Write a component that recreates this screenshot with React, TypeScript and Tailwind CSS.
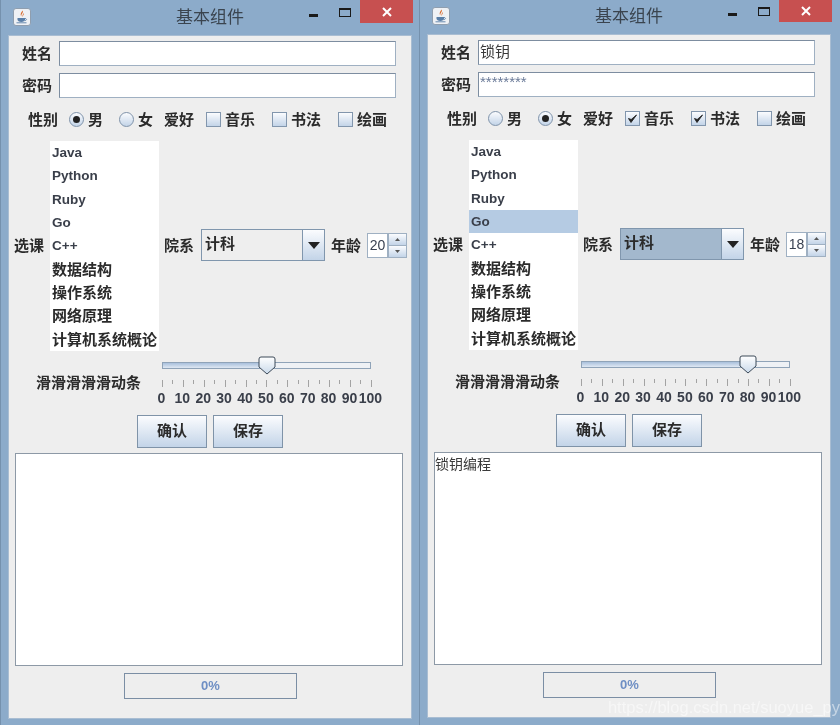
const CJK = "font-['Liberation_Sans','Noto_Sans_CJK_SC',sans-serif]";
const COURSES = ['Java', 'Python', 'Ruby', 'Go', 'C++', '数据结构', '操作系统', '网络原理', '计算机系统概论'];
const GRAD = 'bg-gradient-to-b from-[#fbfcfe] to-[#c3d4e8]';

function JavaIcon() {
  return (
    <svg width="18" height="18" viewBox="0 0 18 18">
      <rect x="0.5" y="0.5" width="17" height="17" rx="2.5" fill="#eef1f5" stroke="#8f9eaf" />
      <path d="M9.5 2.5C11 5 7.5 6 8.5 8.5C7 7 7.5 5.5 9.5 2.5Z M11 5C11 7 9.5 7.5 10 9C9 8 9.5 6.5 11 5Z" fill="#d8692a" />
      <path d="M4.5 10h7.5v1.6c0 1.6-1.5 2.4-3.7 2.4s-3.8-.8-3.8-2.4z" fill="#5a7fa8" />
      <path d="M12 10.5c2 0 2 2-.4 2.2M3.5 14.8h10" stroke="#5a7fa8" fill="none" strokeWidth="0.9" />
    </svg>
  );
}

function Radio({ on }: { on?: boolean }) {
  return (
    <span className={`flex w-[15px] h-[15px] shrink-0 items-center justify-center rounded-full border border-[#7f93aa] ${GRAD}`}>
      {on && <span className="w-[7px] h-[7px] rounded-full bg-[#222222]" />}
    </span>
  );
}

function Check({ on }: { on?: boolean }) {
  return (
    <span className={`flex w-[15px] h-[15px] shrink-0 items-center justify-center border border-[#8296ad] ${GRAD}`}>
      {on && (
        <svg width="11" height="11" viewBox="0 0 11 11">
          <path d="M1.5 5.5L4 9.5L9.5 2L4.2 6.5Z" fill="#222222" stroke="#222222" strokeWidth="0.9" />
        </svg>
      )}
    </span>
  );
}

function Field({ label, value, small }: { label: string; value?: string; small?: boolean }) {
  return (
    <div className="flex items-center h-[25px] pl-[13px]">
      <span className="w-[30px] text-[15px] font-bold text-[#2b2b2b] leading-none">{label}</span>
      <div className="ml-[7px] w-[337px] h-[25px] bg-white border border-[#9fb0c2] border-l-[#7d8da0] border-t-[#7d8da0] flex pl-px">
        <span className={small ? 'text-[15px] leading-[17px] text-[#6a7a98]' : 'text-[15px] leading-[22px] text-[#3a3a3a]'}>{value}</span>
      </div>
    </div>
  );
}

type WinProps = {
  name?: string;
  pwd?: string;
  female?: boolean;
  checks: boolean[];
  selected?: number;
  comboFocus?: boolean;
  age: number;
  pos: number;
  text?: string;
  extra?: string;
  width: string;
};

function Win({ name, pwd, female, checks, selected, comboFocus, age, pos, text, extra, width }: WinProps) {
  return (
    <div className={`${width} h-[726px] shrink-0 bg-[#8cabca] border-l border-[#7591ad] ${extra ?? ''}`}>
      <div className="grid grid-cols-[1fr_auto_1fr] h-[35px] w-[418px]">
        <div className="pl-[12px] pt-[8px]"><JavaIcon /></div>
        <div className="pt-[8px] text-[17px] leading-[20px] text-[#3a444f]">基本组件</div>
        <div className="flex justify-end pr-[6px]">
          <span className="mt-[14px] w-[9px] h-[3px] bg-[#1a1a1a]" />
          <span className="ml-[21px] mt-[8px] w-[12px] h-[9px] border border-[#1a1a1a] border-t-[2px]" />
          <span className="ml-[9px] w-[53px] h-[23px] bg-[#c75050] flex items-center justify-center">
            <svg width="10" height="10" viewBox="0 0 10 10"><path d="M1 1L9 9M9 1L1 9" stroke="#fff" strokeWidth="2" /></svg>
          </span>
        </div>
      </div>

      <div className="ml-[7px] w-[404px] h-[684px] bg-[#eeeeee] border border-[#a9bdd2] pt-[5px] flex flex-col">
        <Field label="姓名" value={name} />
        <div className="mt-[7px]"><Field label="密码" value={pwd} small /></div>

        <div className="flex items-center h-[18px] mt-[12px] pl-[19px] text-[15px] font-bold text-[#2b2b2b] leading-none">
          <span className="w-[30px]">性别</span>
          <span className="ml-[11px]"><Radio on={!female} /></span>
          <span className="ml-[4px] w-[15px]">男</span>
          <span className="ml-[16px]"><Radio on={female} /></span>
          <span className="ml-[4px] w-[15px]">女</span>
          <span className="ml-[11px] w-[30px]">爱好</span>
          <span className="ml-[12px]"><Check on={checks[0]} /></span>
          <span className="ml-[4px] w-[30px]">音乐</span>
          <span className="ml-[17px]"><Check on={checks[1]} /></span>
          <span className="ml-[4px] w-[30px]">书法</span>
          <span className="ml-[17px]"><Check on={checks[2]} /></span>
          <span className="ml-[4px] w-[30px]">绘画</span>
        </div>

        <div className="flex items-center mt-[13px] pl-[5px] text-[15px] font-bold text-[#2b2b2b] leading-none">
          <span className="w-[30px] mb-[2px]">选课</span>
          <div className="ml-[6px] w-[109px] h-[210px] bg-white flex flex-col">
            {COURSES.map((c, i) => (
              <div key={c} className={`h-[23.33px] pl-[2px] flex items-center whitespace-nowrap ${/[a-zA-Z]/.test(c) ? 'text-[13.5px] text-[#3a3f4a]' : ''} ${selected === i ? 'bg-[#b5cbe3]' : ''}`}>
                {c}
              </div>
            ))}
          </div>
          <span className="ml-[5px] w-[30px] mb-[2px]">院系</span>
          <div className="ml-[7px] mb-[2px] w-[124px] h-[32px] flex border border-[#8096ad]">
            <div className={`flex-1 pl-[3px] pt-[6px] ${comboFocus ? 'bg-[#a3b8cd]' : 'bg-[#eeeeee]'}`}>计科</div>
            <div className={`w-[22px] flex items-center justify-center border-l border-[#8096ad] ${GRAD}`}>
              <svg width="12" height="7" viewBox="0 0 12 7"><path d="M0 0H12L6 7Z" fill="#222222" /></svg>
            </div>
          </div>
          <span className="ml-[6px] w-[30px] mb-[2px]">年龄</span>
          <div className="ml-[6px] mb-[2px] w-[40px] h-[25px] flex">
            <div className="w-[21px] bg-white border border-[#9fb0c2] text-[14px] font-normal text-[#3a4252] flex items-center justify-center">{age}</div>
            <div className="w-[19px] flex flex-col">
              <span className={`h-[13px] border border-[#9fb0c2] flex items-center justify-center ${GRAD}`}>
                <svg width="5" height="3" viewBox="0 0 5 3"><path d="M0 3H5L2.5 0Z" fill="#555" /></svg>
              </span>
              <span className={`h-[12px] border border-t-0 border-[#9fb0c2] flex items-center justify-center ${GRAD}`}>
                <svg width="5" height="3" viewBox="0 0 5 3"><path d="M0 0H5L2.5 3Z" fill="#555" /></svg>
              </span>
            </div>
          </div>
        </div>

        <div className="flex items-start mt-[4px] h-[52px] pl-[27px]">
          <span className="w-[107px] text-[15px] font-bold text-[#2b2b2b] leading-none whitespace-nowrap mt-[20px]">滑滑滑滑滑动条</span>
          <div className="ml-[9px] w-[230px] flex flex-col">
            <div className="ml-[10px] w-[209px] h-[7px] mt-[7px] border border-[#8fa3b8] bg-[#eef1f5] flex relative">
              <div className="h-full bg-gradient-to-b from-[#a9c0dc] to-[#dfe8f3]" style={{ width: `${pos}%` }} />
              <svg className="absolute -top-[7px] -ml-[10px]" style={{ left: `${pos}%` }} width="20" height="20" viewBox="0 0 20 20">
                <defs>
                  <linearGradient id={`th${pos}`} x1="0" y1="0" x2="0" y2="1">
                    <stop offset="0" stopColor="#ffffff" />
                    <stop offset="1" stopColor="#c9d9ea" />
                  </linearGradient>
                </defs>
                <path d="M2 3Q2 1 4 1H16Q18 1 18 3V11L10 18L2 11Z" fill={`url(#th${pos})`} stroke="#3d4a58" strokeWidth="1" />
              </svg>
            </div>
            <div className="flex ml-[10px] w-[210px] justify-between items-start h-[7px] mt-[11px]">
              {Array.from({ length: 21 }, (_, i) => (
                <span key={i} className={`w-px bg-[#a3a3a3] ${i % 2 === 0 ? 'h-[7px]' : 'h-[4px]'}`} />
              ))}
            </div>
            <div className="flex mt-[3px] -ml-px">
              {Array.from({ length: 11 }, (_, i) => (
                <span key={i} className="w-[20.9px] shrink-0 flex justify-center text-[14px] font-bold leading-[16px] text-[#3a3f4a]">{i * 10}</span>
              ))}
            </div>
          </div>
        </div>

        <div className="flex justify-center gap-[6px] mt-[8px] text-[15px] font-bold text-[#2b2b2b]">
          <div className={`w-[70px] h-[33px] border border-[#7f93a8] flex items-center justify-center ${GRAD}`}>确认</div>
          <div className={`w-[70px] h-[33px] border border-[#7f93a8] flex items-center justify-center ${GRAD}`}>保存</div>
        </div>

        <div className="ml-[6px] mt-[5px] w-[388px] h-[213px] bg-white border border-[#8d99a6] pt-px text-[14px] leading-[20px] text-[#3a3a3a]">
          {text}
        </div>

        <div className="ml-[115px] mt-[7px] w-[173px] h-[26px] border border-[#7b8ea4] flex items-center justify-center text-[13px] font-bold text-[#6f8fc4]">
          0%
        </div>
      </div>
    </div>
  );
}

export default function App() {
  return (
    <div className={`relative w-[840px] h-[725px] overflow-hidden bg-[#8cabca] flex blur-[0.4px] ${CJK}`}>
      <Win width="w-[419px]" checks={[false, false, false]} age={20} pos={50} />
      <Win
        width="w-[421px]"
        extra="-mt-px"
        name="锁钥"
        pwd="********"
        female
        checks={[true, true, false]}
        selected={3}
        comboFocus
        age={18}
        pos={80}
        text="锁钥编程"
      />
      <span className="absolute right-0 bottom-[7px] text-[16.5px] leading-[22px] text-white/50">https://blog.csdn.net/suoyue_py</span>
    </div>
  );
}
